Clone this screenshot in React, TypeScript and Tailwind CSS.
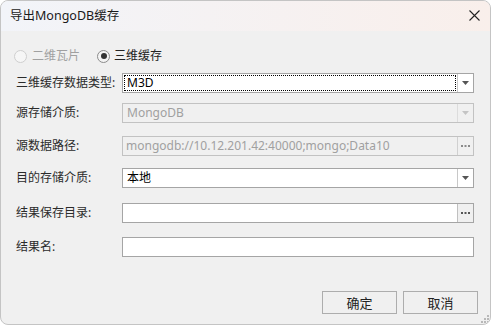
import React from "react";

const FONT = { fontFamily: '"Noto Sans", "Noto Sans CJK SC", sans-serif' };

function Arrow({ disabled }: { disabled?: boolean }) {
  return (
    <svg width="7" height="4" viewBox="0 0 7 4">
      <path d="M0 0H7L3.5 4Z" fill={disabled ? "#c4c4c4" : "#555"} />
    </svg>
  );
}

function Combo({ value, disabled, focused }: { value: string; disabled?: boolean; focused?: boolean }) {
  return (
    <div
      className={`flex h-[20px] w-[352px] shrink-0 border ${
        disabled ? "border-[#c2c2c2] bg-[#f0f0f0]" : "border-[#a5a5a5] bg-white"
      }`}
    >
      <div className="flex flex-1 items-center p-[1px]">
        <div
          className={`flex h-full flex-1 items-center pl-[2px] ${
            focused ? "border border-dotted border-black" : "border border-transparent"
          } ${disabled ? "text-[#a0a0a0]" : "text-black"}`}
        >
          {value}
        </div>
      </div>
      <div
        className={`flex w-[16px] items-center justify-center border-l ${
          disabled ? "border-[#dcdcdc]" : "border-[#c8c8c8]"
        }`}
      >
        <Arrow disabled={disabled} />
      </div>
    </div>
  );
}

function PathBox({ value, disabled }: { value: string; disabled?: boolean }) {
  return (
    <div
      className={`flex h-[20px] w-[352px] shrink-0 border ${
        disabled ? "border-[#c2c2c2] bg-[#f0f0f0]" : "border-[#a5a5a5] bg-white"
      }`}
    >
      <div className={`flex flex-1 items-center pl-[3px] ${disabled ? "text-[#a0a0a0]" : "text-black"}`}>
        {value}
      </div>
      <div
        className={`flex w-[16px] items-center justify-center border-l bg-[#f0f0f0] ${
          disabled ? "border-[#d0d0d0] text-[#8a8a8a]" : "border-[#c0c0c0] text-[#555]"
        }`}
      >
        <svg width="9" height="2" viewBox="0 0 9 2">
          <rect x="0" y="0" width="2" height="2" fill="currentColor" />
          <rect x="3.5" y="0" width="2" height="2" fill="currentColor" />
          <rect x="7" y="0" width="2" height="2" fill="currentColor" />
        </svg>
      </div>
    </div>
  );
}

function Row({ label, children, className }: { label: string; children: React.ReactNode; className?: string }) {
  return (
    <div className={`flex h-[20px] items-center ${className ?? ""}`}>
      <div className="w-[121px] shrink-0 whitespace-nowrap pl-[15px] text-[#2b2b2b]">{label}</div>
      {children}
    </div>
  );
}

export default function App() {
  return (
    <div className="h-[325px] w-[491px] bg-white" style={FONT}>
      <div className="relative flex h-full w-full flex-col overflow-hidden rounded-[8px] border border-[#c4c4c4] bg-[#f0f0f0] text-[12px] leading-[16px]">
        {/* Title bar */}
        <div className="flex h-[30px] shrink-0 items-center justify-between bg-gradient-to-r from-[#f2f4f9] to-[#f9efeb] pl-[9px] pr-[10px]">
          <span className="text-[12.5px] text-[#1a1a1a]">导出MongoDB缓存</span>
          <svg width="11" height="11" viewBox="0 0 11 11" className="mb-[1px]">
            <path d="M0.5 0.5L10.5 10.5M10.5 0.5L0.5 10.5" stroke="#222" strokeWidth="1.1" />
          </svg>
        </div>

        {/* Body */}
        <div className="flex flex-1 flex-col">
          {/* Radios */}
          <div className="mt-[17px] flex h-[16px] items-center pl-[13px]">
            <span className="h-[13px] w-[13px] rounded-full border border-[#cfcfcf] bg-[#f6f6f6]" />
            <span className="ml-[5px] text-[#a0a0a0]">二维瓦片</span>
            <span className="ml-[17px] flex h-[13px] w-[13px] items-center justify-center rounded-full border border-[#8c8c8c] bg-[#f4f4f4]">
              <span className="h-[6px] w-[6px] rounded-full bg-[#333]" />
            </span>
            <span className="ml-[4px] text-[#222]">三维缓存</span>
          </div>

          <Row label="三维缓存数据类型:" className="mt-[9px]">
            <Combo value="M3D" focused />
          </Row>
          <Row label="源存储介质:" className="mt-[10px]">
            <Combo value="MongoDB" disabled />
          </Row>
          <Row label="源数据路径:" className="mt-[13px]">
            <PathBox value="mongodb://10.12.201.42:40000;mongo;Data10" disabled />
          </Row>
          <Row label="目的存储介质:" className="mt-[12px]">
            <Combo value="本地" />
          </Row>
          <Row label="结果保存目录:" className="mt-[15px]">
            <PathBox value="" />
          </Row>
          <Row label="结果名:" className="mt-[14px]">
            <div className="h-[20px] w-[352px] shrink-0 border border-[#a5a5a5] bg-white" />
          </Row>

          {/* Buttons */}
          <div className="mt-[34px] flex justify-end gap-[6px] pr-[12px]">
            <button className="h-[23px] w-[75px] border border-[#adadad] bg-[#f0f0f0] text-[13px] text-[#222]">
              确定
            </button>
            <button className="h-[23px] w-[75px] border border-[#adadad] bg-[#f0f0f0] text-[13px] text-[#222]">
              取消
            </button>
          </div>
        </div>

        {/* Resize grip */}
        <svg width="8" height="8" viewBox="0 0 8 8" className="absolute bottom-[1px] right-[1px]">
          <rect x="6" y="0" width="2" height="2" fill="#b8b8b8" />
          <rect x="3" y="3" width="2" height="2" fill="#b8b8b8" />
          <rect x="6" y="3" width="2" height="2" fill="#b8b8b8" />
          <rect x="0" y="6" width="2" height="2" fill="#b8b8b8" />
          <rect x="3" y="6" width="2" height="2" fill="#b8b8b8" />
          <rect x="6" y="6" width="2" height="2" fill="#b8b8b8" />
        </svg>
      </div>
    </div>
  );
}
